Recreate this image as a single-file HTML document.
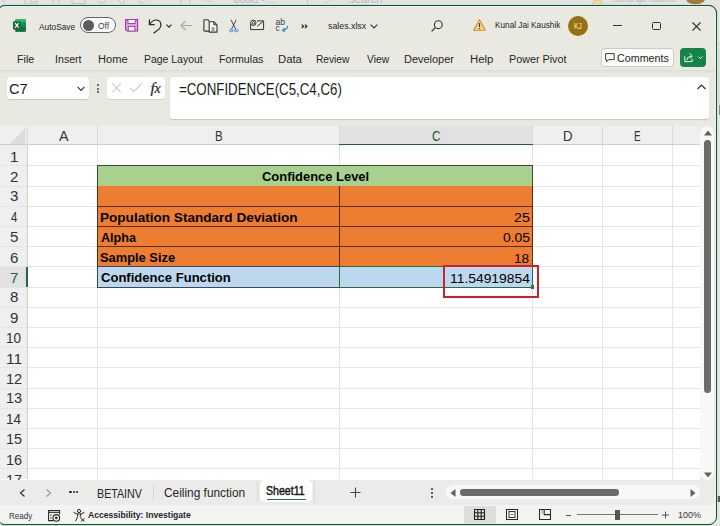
<!DOCTYPE html>
<html><head><meta charset="utf-8">
<style>
*{margin:0;padding:0;box-sizing:border-box}
html,body{width:720px;height:526px;overflow:hidden;background:#e4e4e4;position:relative;font-family:"Liberation Sans",sans-serif}
.a{position:absolute}
.tx{position:absolute;white-space:pre;line-height:1;transform-origin:0 0;font-family:"Liberation Sans",sans-serif}
.gv{position:absolute;width:1px;background:#e5e5e5}
.gh{position:absolute;height:1px;background:#e5e5e5}
svg{position:absolute;overflow:visible}
</style></head><body>
<!-- background window strip -->
<div class="a" style="left:0;top:0;width:720px;height:8px;background:#e3e3e4"></div>
<!-- faded background window features -->
<svg style="left:0;top:0" width="720" height="6" viewBox="0 0 720 6">
<g fill="none" stroke="#c4c4c4" stroke-width="1">
<path d="M2 0 L5 3"/>
<path d="M25 0 V4 H30 M31 0 V4 H37 V0 M32 2 H36"/>
<path d="M54 0 L52 4 M58 0 L60 4"/>
<path d="M72 0 V3.5 H85 V0"/>
<path d="M98 1 Q100 4 104 3 M106 0 L104 3"/>
<path d="M119 0 L121 4 M124 0 V4"/>
<path d="M138 0 L141 3 H145"/>
<path d="M181 0 V5 M190 0 V5"/>
<path d="M207 0 L209 2 L211 0"/>
<path d="M307.5 0 V5"/>
<path d="M325 4 L329 0"/>
<path d="M640 0 V5"/>
</g>
<path d="M592 5 L595 0 L600 0 L603 5 Z" fill="#efd9a8" stroke="#e9b774" stroke-width="0.8"/>
<ellipse cx="695.5" cy="-2.5" rx="10" ry="7" fill="#a07d35"/>
</svg>
<div class="tx" style="left:233.5px;top:-6px;font-size:11px;color:#b9b9b9;transform:scaleX(0.8)">Book1 - ...</div>
<div class="tx" style="left:347.5px;top:-6px;font-size:11px;color:#b9b9b9">Search</div>
<div class="tx" style="left:613px;top:-6px;font-size:10px;color:#bdbdbd;transform:scaleX(0.8)">Kunal Jai Kaushik</div>
<div class="a" style="left:717px;top:0;width:3px;height:526px;background:#e6e6e6"></div>
<div class="a" style="left:717px;top:44px;width:3px;height:1px;background:#cfcfcf"></div>
<div class="a" style="left:717px;top:49px;width:3px;height:56px;background:#dedede"></div>
<div class="a" style="left:718.5px;top:105px;width:1.5px;height:10px;background:#8a8a8a"></div>
<div class="a" style="left:717px;top:495.5px;width:3px;height:6px;background:#5a5a5a"></div>

<!-- window -->
<div class="a" id="win" style="left:-1.7px;top:5px;width:718.7px;height:520px;border:1.5px solid #245c3c;border-radius:6.5px 8px 8px 6.5px;background:#e9e9e2;overflow:hidden">
</div>

<!-- menu separator -->
<div class="a" style="left:0;top:70px;width:717px;height:1px;background:#dcdbd3"></div>
<div class="a" style="left:0;top:71px;width:717px;height:2px;background:#e4e3dc"></div>
<!-- name box -->
<div class="a" style="left:7px;top:77px;width:82px;height:22px;background:#fff;border-radius:3px;box-shadow:0 0.6px 1px rgba(0,0,0,0.14)"></div>
<svg style="left:77px;top:86px" width="8" height="6" viewBox="0 0 8 6"><path d="M0.6 0.8 L4 4.4 L7.4 0.8" fill="none" stroke="#333" stroke-width="1.1"/></svg>
<!-- vertical dots -->
<div class="a" style="left:96.8px;top:84px;width:2px;height:2px;background:#444;border-radius:1px"></div>
<div class="a" style="left:96.8px;top:87.5px;width:2px;height:2px;background:#444;border-radius:1px"></div>
<div class="a" style="left:96.8px;top:91px;width:2px;height:2px;background:#444;border-radius:1px"></div>
<!-- X check fx box -->
<div class="a" style="left:107px;top:77px;width:58px;height:22px;background:#fff;border-radius:3px;box-shadow:0 0.6px 1px rgba(0,0,0,0.1)"></div>
<svg style="left:111px;top:82px" width="11" height="11" viewBox="0 0 11 11"><path d="M1 1.3 L10 10.5 M10 1.3 L1 10.5" stroke="#a6a6a6" stroke-width="0.9"/></svg>
<svg style="left:129px;top:82px" width="14" height="11" viewBox="0 0 14 11"><path d="M1 5.8 L4.9 9.6 L13 1.2" fill="none" stroke="#a6a6a6" stroke-width="0.9"/></svg>
<div class="tx" style="left:150.5px;top:80.3px;font:italic 15.5px/1 'Liberation Serif',serif;color:#1e1e1e;-webkit-text-stroke:0.2px #1e1e1e;letter-spacing:-0.3px">f<span style="font-size:14px">x</span></div>
<!-- formula box -->
<div class="a" style="left:169.5px;top:77px;width:539px;height:42px;background:#fff;border-radius:3px;box-shadow:0 0.6px 1px rgba(0,0,0,0.14)"></div>
<svg style="left:697px;top:84px" width="9" height="6" viewBox="0 0 9 6"><path d="M0.5 5 L4.5 1 L8.5 5" fill="none" stroke="#333" stroke-width="1.2"/></svg>

<!-- grid area -->
<div class="a" style="left:0;top:125.5px;width:700px;height:354px;background:#fff"></div>
<!-- col headers -->
<div class="a" style="left:0;top:125.5px;width:700px;height:19.5px;background:#efefef"></div>
<div class="a" style="left:339px;top:125.5px;width:194px;height:19.5px;background:#e1e1e1"></div>
<div class="a" style="left:0;top:144.3px;width:700px;height:1.2px;background:#cdcdcd"></div>
<div class="a" style="left:339px;top:143.8px;width:194px;height:1.7px;background:#1f5f3c"></div>
<!-- corner triangle -->
<svg style="left:10px;top:127.8px" width="16" height="16" viewBox="0 0 16 16"><path d="M15.5 0 L15.5 16 L0 16 Z" fill="#dcdcdc"/></svg>
<div class="a" style="left:27px;top:127px;width:1px;height:18px;background:#dadada"></div>
<!-- row headers -->
<div class="a" style="left:0;top:145px;width:27px;height:334px;background:#efefef"></div>
<div class="a" style="left:0;top:266.5px;width:27px;height:20.5px;background:#e1e1e1"></div>
<div class="a" style="left:27px;top:145px;width:1px;height:334px;background:#d2d2d2"></div>
<div class="a" style="left:26.3px;top:266.5px;width:1.6px;height:20.5px;background:#2a6244"></div>
<div class="gv" style="left:97px;top:145px;height:334px"></div>
<div class="gv" style="left:97px;top:126px;height:18px;background:#d9d9d9"></div>
<div class="gv" style="left:339px;top:145px;height:334px"></div>
<div class="gv" style="left:339px;top:126px;height:18px;background:#d9d9d9"></div>
<div class="gv" style="left:532px;top:145px;height:334px"></div>
<div class="gv" style="left:532px;top:126px;height:18px;background:#d9d9d9"></div>
<div class="gv" style="left:602px;top:145px;height:334px"></div>
<div class="gv" style="left:602px;top:126px;height:18px;background:#d9d9d9"></div>
<div class="gv" style="left:672px;top:145px;height:334px"></div>
<div class="gv" style="left:672px;top:126px;height:18px;background:#d9d9d9"></div>
<div class="gh" style="left:28px;top:165px;width:672px"></div>
<div class="gh" style="left:0px;top:165px;width:27px;background:#e5e5e5"></div>
<div class="gh" style="left:28px;top:186px;width:672px"></div>
<div class="gh" style="left:0px;top:186px;width:27px;background:#e5e5e5"></div>
<div class="gh" style="left:28px;top:206px;width:672px"></div>
<div class="gh" style="left:0px;top:206px;width:27px;background:#e5e5e5"></div>
<div class="gh" style="left:28px;top:226px;width:672px"></div>
<div class="gh" style="left:0px;top:226px;width:27px;background:#e5e5e5"></div>
<div class="gh" style="left:28px;top:246px;width:672px"></div>
<div class="gh" style="left:0px;top:246px;width:27px;background:#e5e5e5"></div>
<div class="gh" style="left:28px;top:266px;width:672px"></div>
<div class="gh" style="left:0px;top:266px;width:27px;background:#e5e5e5"></div>
<div class="gh" style="left:28px;top:287px;width:672px"></div>
<div class="gh" style="left:0px;top:287px;width:27px;background:#e5e5e5"></div>
<div class="gh" style="left:28px;top:307px;width:672px"></div>
<div class="gh" style="left:0px;top:307px;width:27px;background:#e5e5e5"></div>
<div class="gh" style="left:28px;top:327px;width:672px"></div>
<div class="gh" style="left:0px;top:327px;width:27px;background:#e5e5e5"></div>
<div class="gh" style="left:28px;top:347px;width:672px"></div>
<div class="gh" style="left:0px;top:347px;width:27px;background:#e5e5e5"></div>
<div class="gh" style="left:28px;top:367px;width:672px"></div>
<div class="gh" style="left:0px;top:367px;width:27px;background:#e5e5e5"></div>
<div class="gh" style="left:28px;top:388px;width:672px"></div>
<div class="gh" style="left:0px;top:388px;width:27px;background:#e5e5e5"></div>
<div class="gh" style="left:28px;top:408px;width:672px"></div>
<div class="gh" style="left:0px;top:408px;width:27px;background:#e5e5e5"></div>
<div class="gh" style="left:28px;top:428px;width:672px"></div>
<div class="gh" style="left:0px;top:428px;width:27px;background:#e5e5e5"></div>
<div class="gh" style="left:28px;top:448px;width:672px"></div>
<div class="gh" style="left:0px;top:448px;width:27px;background:#e5e5e5"></div>
<div class="gh" style="left:28px;top:468px;width:672px"></div>
<div class="gh" style="left:0px;top:468px;width:27px;background:#e5e5e5"></div>

<!-- table -->
<div class="a" style="left:97px;top:165px;width:436px;height:22px;background:#a9d18e;border:1px solid #3f4a35"></div>
<div class="a" style="left:97px;top:186px;width:436px;height:81px;background:#ed7d31;border:1px solid #5a2a0a;border-top:none"></div>
<div class="a" style="left:98px;top:206px;width:434px;height:1px;background:#5a2a0a"></div>
<div class="a" style="left:98px;top:226px;width:434px;height:1px;background:#5a2a0a"></div>
<div class="a" style="left:98px;top:246px;width:434px;height:1px;background:#5a2a0a"></div>
<div class="a" style="left:339px;top:186px;width:1px;height:81px;background:#5a2a0a"></div>
<div class="a" style="left:97px;top:266px;width:436px;height:21.5px;background:#bdd7ee;border:1px solid #3a4a5a"></div>
<div class="a" style="left:339px;top:266px;width:1px;height:21px;background:#3a4a5a"></div>
<!-- active cell border -->
<div class="a" style="left:339px;top:266px;width:194px;height:21.5px;border:1px solid #2a6b45"></div>
<div class="a" style="left:530.5px;top:284.8px;width:3.8px;height:3.8px;background:#2a7a45"></div>
<!-- red annotation -->
<div class="a" style="left:442.5px;top:265.2px;width:96.5px;height:33.2px;border:2.6px solid #cc2229"></div>

<div class="tx" style="left:58.50px;top:128.80px;font-size:14.2px;font-weight:normal;color:#333;transform:scaleX(1.0111);">A</div>
<div class="tx" style="left:214.78px;top:129.84px;font-size:13.91px;font-weight:normal;color:#333;transform:scaleX(0.8250);">B</div>
<div class="tx" style="left:431.67px;top:128.80px;font-size:14.2px;font-weight:normal;color:#1e5a36;transform:scaleX(0.8333);">C</div>
<div class="tx" style="left:562.67px;top:128.80px;font-size:14.2px;font-weight:normal;color:#333;transform:scaleX(0.9333);">D</div>
<div class="tx" style="left:634.30px;top:128.80px;font-size:14.2px;font-weight:normal;color:#333;transform:scaleX(0.7000);">E</div>
<div class="tx" style="left:9.53px;top:149.70px;font-size:14.2px;font-weight:normal;color:#333;transform:scaleX(1.0667);">1</div>
<div class="tx" style="left:9.53px;top:169.50px;font-size:14.2px;font-weight:normal;color:#333;transform:scaleX(1.0667);">2</div>
<div class="tx" style="left:9.53px;top:189.30px;font-size:14.2px;font-weight:normal;color:#333;transform:scaleX(1.0667);">3</div>
<div class="tx" style="left:10.60px;top:210.10px;font-size:14.2px;font-weight:normal;color:#333;transform:scaleX(0.8000);">4</div>
<div class="tx" style="left:9.53px;top:229.90px;font-size:14.2px;font-weight:normal;color:#333;transform:scaleX(1.0667);">5</div>
<div class="tx" style="left:9.53px;top:250.70px;font-size:14.2px;font-weight:normal;color:#333;transform:scaleX(1.0667);">6</div>
<div class="tx" style="left:9.53px;top:270.50px;font-size:14.2px;font-weight:normal;color:#2a6244;transform:scaleX(1.0667);">7</div>
<div class="tx" style="left:9.53px;top:290.30px;font-size:14.2px;font-weight:normal;color:#333;transform:scaleX(1.0667);">8</div>
<div class="tx" style="left:9.53px;top:311.10px;font-size:14.2px;font-weight:normal;color:#333;transform:scaleX(1.0667);">9</div>
<div class="tx" style="left:5.85px;top:330.90px;font-size:14.2px;font-weight:normal;color:#333;transform:scaleX(0.9533);">10</div>
<div class="tx" style="left:5.70px;top:351.70px;font-size:14.2px;font-weight:normal;color:#333;transform:scaleX(1.1000);">11</div>
<div class="tx" style="left:5.78px;top:371.50px;font-size:14.2px;font-weight:normal;color:#333;transform:scaleX(1.0214);">12</div>
<div class="tx" style="left:5.78px;top:391.30px;font-size:14.2px;font-weight:normal;color:#333;transform:scaleX(1.0214);">13</div>
<div class="tx" style="left:5.85px;top:412.10px;font-size:14.2px;font-weight:normal;color:#333;transform:scaleX(0.9533);">14</div>
<div class="tx" style="left:5.78px;top:431.90px;font-size:14.2px;font-weight:normal;color:#333;transform:scaleX(1.0214);">15</div>
<div class="tx" style="left:5.78px;top:452.70px;font-size:14.2px;font-weight:normal;color:#333;transform:scaleX(1.0214);">16</div>
<div class="tx" style="left:5.78px;top:472.50px;font-size:14.2px;font-weight:normal;color:#333;transform:scaleX(1.0214);">17</div>
<div class="tx" style="left:261.70px;top:169.89px;font-size:13.62px;font-weight:bold;color:#000;transform:scaleX(0.9509);">Confidence Level</div>
<div class="tx" style="left:99.79px;top:210.76px;font-size:13.48px;font-weight:bold;color:#000;transform:scaleX(1.0072);">Population Standard Deviation</div>
<div class="tx" style="left:100.80px;top:230.71px;font-size:13.48px;font-weight:bold;color:#000;transform:scaleX(0.9368);">Alpha</div>
<div class="tx" style="left:99.85px;top:251.36px;font-size:13.48px;font-weight:bold;color:#000;transform:scaleX(0.9545);">Sample Size</div>
<div class="tx" style="left:100.80px;top:271.16px;font-size:13.48px;font-weight:bold;color:#000;transform:scaleX(0.9692);">Confidence Function</div>
<div class="tx" style="left:513.68px;top:212.12px;font-size:12.75px;font-weight:normal;color:#000;transform:scaleX(1.1154);">25</div>
<div class="tx" style="left:503.10px;top:231.92px;font-size:12.75px;font-weight:normal;color:#000;transform:scaleX(1.0917);">0.05</div>
<div class="tx" style="left:514.33px;top:252.72px;font-size:12.75px;font-weight:normal;color:#000;transform:scaleX(1.0692);">18</div>
<div class="tx" style="left:449.54px;top:271.98px;font-size:13.04px;font-weight:normal;color:#000;transform:scaleX(1.0635);">11.54919854</div>
<!-- vertical scrollbar -->
<div class="a" style="left:700px;top:125px;width:17px;height:355px;background:#e9e9e2"></div>
<div class="a" style="left:700.3px;top:126px;width:13.8px;height:354px;background:#f8f8f8;border-radius:6.9px"></div>
<svg style="left:703.5px;top:129.5px" width="8" height="6" viewBox="0 0 8 6"><path d="M0 5.5 L4 0.5 L8 5.5 Z" fill="#5f5f5f"/></svg>
<div class="a" style="left:703.8px;top:139.8px;width:7.6px;height:253.2px;background:#6b6b6b;border-radius:3.8px"></div>
<svg style="left:704px;top:471.5px" width="8" height="6" viewBox="0 0 8 6"><path d="M0 0.5 L4 5.5 L8 0.5 Z" fill="#5f5f5f"/></svg>

<!-- tab bar -->
<div class="a" style="left:0;top:479.5px;width:717px;height:25.5px;background:#ebebe9"></div>
<svg style="left:18.5px;top:488.5px" width="7" height="8" viewBox="0 0 7 8"><path d="M5.5 0.5 L1.5 4 L5.5 7.5" fill="none" stroke="#333" stroke-width="1.2"/></svg>
<svg style="left:45px;top:488.5px" width="7" height="8" viewBox="0 0 7 8"><path d="M1.5 0.5 L5.5 4 L1.5 7.5" fill="none" stroke="#9a9a9a" stroke-width="1.2"/></svg>
<div class="a" style="left:69.4px;top:491px;width:2.2px;height:2.2px;background:#222;border-radius:1.1px"></div>
<div class="a" style="left:72.6px;top:491px;width:2.2px;height:2.2px;background:#222;border-radius:1.1px"></div>
<div class="a" style="left:75.8px;top:491px;width:2.2px;height:2.2px;background:#222;border-radius:1.1px"></div>
<div class="a" style="left:153px;top:485px;width:1px;height:15px;background:#d2d2d2"></div>
<div class="a" style="left:256.5px;top:481px;width:1.2px;height:21px;background:#d9d9d9"></div>
<div class="a" style="left:259.5px;top:479.6px;width:52px;height:22.8px;background:#fff;border-radius:5px"></div>
<div class="a" style="left:266.5px;top:498.5px;width:39px;height:1.5px;background:#217346;border-radius:1px"></div>
<div class="a" style="left:314.3px;top:481px;width:1.2px;height:21px;background:#d9d9d9"></div>
<svg style="left:349.5px;top:487px" width="11" height="11" viewBox="0 0 11 11"><path d="M5.5 0.5 V10.5 M0.5 5.5 H10.5" stroke="#444" stroke-width="1.1"/></svg>
<div class="a" style="left:431.3px;top:488px;width:2px;height:2px;background:#333;border-radius:1px"></div>
<div class="a" style="left:431.3px;top:492px;width:2px;height:2px;background:#333;border-radius:1px"></div>
<div class="a" style="left:431.3px;top:496px;width:2px;height:2px;background:#333;border-radius:1px"></div>
<!-- h scrollbar -->
<div class="a" style="left:445.5px;top:485.2px;width:254px;height:13.6px;background:#f8f8f8;border-radius:6.8px"></div>
<svg style="left:450px;top:488.5px" width="6" height="8" viewBox="0 0 6 8"><path d="M5.5 0 L0.5 4 L5.5 8 Z" fill="#5f5f5f"/></svg>
<div class="a" style="left:459.5px;top:489px;width:159.5px;height:6.5px;background:#6a6a6a;border-radius:3.25px"></div>
<svg style="left:690px;top:488.5px" width="6" height="8" viewBox="0 0 6 8"><path d="M0.5 0 L5.5 4 L0.5 8 Z" fill="#5f5f5f"/></svg>

<!-- status bar -->
<div class="a" style="left:0;top:505px;width:717px;height:19px;background:#f3f3f3"></div>
<div class="a" style="left:463.5px;top:506px;width:32px;height:17.5px;background:#dedede"></div>
<!-- status icons -->
<svg style="left:47.5px;top:509.5px" width="13" height="12" viewBox="0 0 13 12"><path d="M5 10.6 H0.6 V0.6 H11.6 V4.5" fill="none" stroke="#2a2a2a" stroke-width="1.1"/><path d="M0.6 2.5 H11.6" stroke="#2a2a2a" stroke-width="0.9"/><rect x="2.3" y="4.6" width="1.2" height="1.2" fill="#2a2a2a"/><rect x="2.3" y="7.3" width="1.2" height="1.2" fill="#2a2a2a"/><circle cx="8.3" cy="7.9" r="3.3" fill="#f2f2f0" stroke="#2a2a2a" stroke-width="1.1"/><circle cx="8.3" cy="7.9" r="1.3" fill="#2a2a2a"/></svg>
<svg style="left:73px;top:508.5px" width="13" height="13" viewBox="0 0 13 13"><circle cx="6" cy="2" r="1.6" fill="none" stroke="#2a2a2a" stroke-width="1"/><path d="M0.8 3.5 Q3.3 5.2 6 5 Q8.7 5.2 11.2 3.5 M4.4 5.1 L4.7 7.6 L2.7 11.8 M7.6 5.1 L7.3 7.6 L8.1 9" fill="none" stroke="#2a2a2a" stroke-width="1" stroke-linejoin="round" stroke-linecap="round"/><path d="M7.9 9.3 L11.5 12.5 M11.5 9.3 L7.9 12.5" stroke="#2a2a2a" stroke-width="1"/></svg>
<svg style="left:474px;top:509.2px" width="11" height="11" viewBox="0 0 11 11"><path d="M0.5 0.5 H10.5 V10.5 H0.5 Z M0.5 3.8 H10.5 M0.5 7.2 H10.5 M3.8 0.5 V10.5 M7.2 0.5 V10.5" fill="none" stroke="#222" stroke-width="1.1"/></svg>
<svg style="left:506px;top:509.2px" width="12" height="11" viewBox="0 0 12 11"><rect x="0.5" y="0.5" width="11" height="10" fill="none" stroke="#2a2a2a" stroke-width="1.05"/><rect x="3" y="2.5" width="6" height="6" fill="none" stroke="#2a2a2a" stroke-width="0.9"/><path d="M4.5 5.5 H7.5" stroke="#555" stroke-width="0.7"/></svg>
<svg style="left:539px;top:509.2px" width="12" height="11" viewBox="0 0 12 11"><path d="M0.5 0.5 H11.5 V10.5 H0.5 Z M5.2 0.5 V5.6 H11.5" fill="none" stroke="#2a2a2a" stroke-width="1.05"/><path d="M3.2 1 V4.8" stroke="#777" stroke-width="0.8"/></svg>
<div class="a" style="left:565.5px;top:514.5px;width:5.5px;height:1px;background:#555"></div>
<div class="a" style="left:576.7px;top:514.2px;width:81px;height:1.2px;background:#777"></div>
<div class="a" style="left:615px;top:509.5px;width:4.5px;height:10px;background:#555"></div>
<svg style="left:662px;top:509.5px" width="7" height="10" viewBox="0 0 7 10"><path d="M3.5 1.5 V8.5 M0 5 H7" stroke="#555" stroke-width="1"/></svg>

<!-- ========== TITLE BAR ICONS ========== -->
<!-- excel icon -->
<svg style="left:13px;top:19px" width="13" height="13" viewBox="0 0 13 13">
<rect x="2.3" y="0" width="10.6" height="12.7" rx="1" fill="#1f9e5f"/>
<rect x="2.3" y="0" width="10.6" height="3.2" rx="1" fill="#2cb673"/>
<rect x="7.5" y="3.2" width="5.4" height="4.6" fill="#1c8c52"/>
<rect x="2.3" y="7.8" width="10.6" height="4.9" rx="1" fill="#12703d"/>
<rect x="0" y="2.3" width="7.8" height="8.3" rx="0.8" fill="#176a3c"/>
<path d="M2.1 4.2 L5.7 8.7 M5.7 4.2 L2.1 8.7" stroke="#fff" stroke-width="1.15"/>
</svg>
<!-- toggle -->
<div class="a" style="left:80px;top:17.2px;width:35.6px;height:16.1px;border:0.9px solid #666;border-radius:8px;background:#fbfbfa"></div>
<div class="a" style="left:82.8px;top:19.6px;width:11.2px;height:11.2px;border-radius:50%;background:#5c5c5c"></div>
<!-- save -->
<svg style="left:125px;top:19px" width="14" height="13" viewBox="0 0 14 13">
<path d="M0.6 0.6 H12.6 V12 H2.1 L0.6 10.5 Z" fill="#e7a0ea" stroke="#9c3aa0" stroke-width="1.1"/>
<rect x="3" y="0.6" width="7.2" height="3.9" fill="#fff" stroke="#9c3aa0" stroke-width="0.9"/>
<rect x="3.3" y="7.4" width="6.6" height="4.6" fill="#fff" stroke="#9c3aa0" stroke-width="0.9"/>
</svg>
<!-- undo -->
<svg style="left:148px;top:18px" width="15" height="16" viewBox="0 0 15 16">
<path d="M1.4 1.4 V6.6 H6.6" fill="none" stroke="#2a2a2a" stroke-width="1.2"/>
<path d="M1.7 6.3 Q4.5 1.8 8.6 2 Q12.9 2.6 12.9 6.9 Q12.9 9.1 11 11.1 L5.6 15.3" fill="none" stroke="#2a2a2a" stroke-width="1.2"/>
</svg>
<svg style="left:165.8px;top:23.6px" width="6" height="4" viewBox="0 0 6 4"><path d="M0.5 0.6 L3 3.2 L5.5 0.6" fill="none" stroke="#2a2a2a" stroke-width="1.1"/></svg>
<!-- back arrow -->
<svg style="left:180px;top:20px" width="13" height="11" viewBox="0 0 13 11"><path d="M12.5 5.5 H1 M5.5 1 L1 5.5 L5.5 10" fill="none" stroke="#a8a8a8" stroke-width="1.1"/></svg>
<!-- copy icon -->
<svg style="left:202.5px;top:18.5px" width="15" height="14" viewBox="0 0 15 14">
<path d="M6 12.1 H1.8 Q0.9 12.1 0.9 11.2 V1.6 Q0.9 0.8 1.8 0.8 H5 L6.5 2.5" fill="none" stroke="#333" stroke-width="1.1"/>
<path d="M6.2 2.7 H10.8 L14 5.8 V13.1 H6.2 Z" fill="#f7f7f5" stroke="#333" stroke-width="1.1" stroke-linejoin="round"/>
<path d="M10.8 2.7 V5.8 H14" fill="none" stroke="#333" stroke-width="1"/>
<path d="M8.6 9 H11.6 M8.6 11 H11.6" stroke="#333" stroke-width="0.9"/>
</svg>
<!-- scissors -->
<svg style="left:229px;top:19px" width="10" height="13" viewBox="0 0 10 13">
<path d="M2 0.8 L6.6 10 M7.2 0.8 L2.6 10" stroke="#333" stroke-width="0.9"/>
<ellipse cx="2.3" cy="11.6" rx="1.9" ry="1.2" fill="#b5d5ee" stroke="#4a90c8" stroke-width="0.9"/>
<ellipse cx="7.3" cy="11.6" rx="1.9" ry="1.2" fill="#b5d5ee" stroke="#4a90c8" stroke-width="0.9"/>
</svg>
<!-- email-ish icon -->
<svg style="left:250px;top:19px" width="15" height="12" viewBox="0 0 15 12">
<path d="M0.6 5 V10.6 H13.6 V1.9 H7" fill="none" stroke="#333" stroke-width="1"/>
<path d="M7.3 7.2 L13.3 2.2" stroke="#333" stroke-width="1"/>
<circle cx="3.3" cy="3.8" r="2.7" fill="#e9e9e2" stroke="#333" stroke-width="1"/>
<ellipse cx="3.5" cy="3.9" rx="0.9" ry="1.5" fill="none" stroke="#333" stroke-width="0.8"/>
</svg>
<!-- spelling -->
<div class="tx" style="left:275.6px;top:18px;font:8.6px/1 'Liberation Sans';color:#3a3a3a">ab</div>
<div class="tx" style="left:275.6px;top:24.4px;font:8.4px/1 'Liberation Sans';color:#3a3a3a">c</div>
<svg style="left:280px;top:25px" width="9" height="7" viewBox="0 0 9 7"><path d="M7.6 0.8 Q7.6 5 3.2 5.2 M5 3.3 L2.4 5.2 L5 7" fill="none" stroke="#2a8fbf" stroke-width="1.1"/></svg>
<!-- >> -->
<svg style="left:300.8px;top:24px" width="7" height="5" viewBox="0 0 7 5"><path d="M0.7 0.6 L2.6 2.3 L0.7 4 M4 0.6 L5.9 2.3 L4 4" fill="none" stroke="#222" stroke-width="1.2"/></svg>
<!-- filename chevron -->
<svg style="left:370px;top:23.5px" width="8" height="5" viewBox="0 0 8 5"><path d="M0.6 0.6 L4 4 L7.4 0.6" fill="none" stroke="#333" stroke-width="1.1"/></svg>
<!-- search -->
<svg style="left:431px;top:19.5px" width="12" height="12" viewBox="0 0 12 12"><circle cx="7.3" cy="4.7" r="3.9" fill="none" stroke="#333" stroke-width="1.1"/><path d="M4.5 7.5 L0.6 11.4" stroke="#333" stroke-width="1.2"/></svg>
<!-- warning -->
<svg style="left:473px;top:19px" width="13" height="12" viewBox="0 0 13 12"><path d="M6.5 0.8 L12.4 11.2 H0.6 Z" fill="#f7d08a" stroke="#e0852f" stroke-width="1.1" stroke-linejoin="round"/><path d="M6.5 4 V8" stroke="#333" stroke-width="1.1"/><circle cx="6.5" cy="9.6" r="0.6" fill="#333"/></svg>
<!-- avatar -->
<div class="a" style="left:568px;top:16px;width:20px;height:20px;border-radius:50%;background:#97700f"></div>
<!-- window controls -->
<div class="a" style="left:613px;top:25px;width:9px;height:1px;background:#333"></div>
<div class="a" style="left:652px;top:21.5px;width:9px;height:8.5px;border:1.1px solid #333;border-radius:1.5px"></div>
<svg style="left:691.5px;top:21.5px" width="9" height="9" viewBox="0 0 9 9"><path d="M0.5 0.5 L8.5 8.5 M8.5 0.5 L0.5 8.5" stroke="#333" stroke-width="1.1"/></svg>

<!-- comments button -->
<div class="a" style="left:600.5px;top:47.8px;width:73.5px;height:19.2px;border:1px solid #c9c9c6;border-radius:4px;background:#fbfbfa"></div>
<svg style="left:604.5px;top:52.5px" width="10" height="10" viewBox="0 0 10 10"><path d="M0.6 0.6 H9.2 V6.6 H3.6 L1.6 8.8 V6.6 H0.6 Z" fill="none" stroke="#333" stroke-width="0.95" stroke-linejoin="round"/></svg>
<!-- share button -->
<div class="a" style="left:680px;top:47.8px;width:26px;height:19.2px;border-radius:4px;background:#14844a"></div>
<svg style="left:683.5px;top:52px" width="11" height="11" viewBox="0 0 11 11"><path d="M0.8 4.3 V9.6 H8.2 V7" fill="none" stroke="#e8fbef" stroke-width="1"/><path d="M2.8 8 Q3 4.8 7 4.2" fill="none" stroke="#e8fbef" stroke-width="1"/><path d="M5.5 1.5 L8.4 4 L6 6.6" fill="none" stroke="#e8fbef" stroke-width="1" stroke-linejoin="round"/></svg>
<svg style="left:697.5px;top:56.2px" width="5" height="4" viewBox="0 0 5 4"><path d="M0.5 0.6 L2.5 2.6 L4.5 0.6" fill="none" stroke="#e8fbef" stroke-width="1"/></svg>

<div class="tx" style="left:38.80px;top:22.58px;font-size:8.84px;font-weight:normal;color:#262626;transform:scaleX(0.9447);">AutoSave</div>
<div class="tx" style="left:98.10px;top:21.61px;font-size:8.99px;font-weight:normal;color:#444;transform:scaleX(0.9417);">Off</div>
<div class="tx" style="left:328.00px;top:21.14px;font-size:9.71px;font-weight:normal;color:#262626;transform:scaleX(0.9071);">sales.xlsx</div>
<div class="tx" style="left:494.64px;top:20.42px;font-size:9.57px;font-weight:normal;color:#262626;transform:scaleX(0.8600);">Kunal Jai Kaushik</div>
<div class="tx" style="left:573.52px;top:22.12px;font-size:8.55px;font-weight:normal;color:#f8ecc8;transform:scaleX(0.7778);">KJ</div>
<div class="tx" style="left:16.58px;top:53.91px;font-size:10.58px;font-weight:normal;color:#262626;transform:scaleX(1.0187);">File</div>
<div class="tx" style="left:55.10px;top:53.91px;font-size:10.58px;font-weight:normal;color:#262626;transform:scaleX(1.0000);">Insert</div>
<div class="tx" style="left:98.25px;top:53.91px;font-size:10.58px;font-weight:normal;color:#262626;transform:scaleX(1.0519);">Home</div>
<div class="tx" style="left:144.01px;top:53.91px;font-size:10.58px;font-weight:normal;color:#262626;transform:scaleX(0.9879);">Page Layout</div>
<div class="tx" style="left:218.99px;top:53.91px;font-size:10.58px;font-weight:normal;color:#262626;transform:scaleX(1.0070);">Formulas</div>
<div class="tx" style="left:278.23px;top:53.91px;font-size:10.58px;font-weight:normal;color:#262626;transform:scaleX(1.0667);">Data</div>
<div class="tx" style="left:316.34px;top:53.91px;font-size:10.58px;font-weight:normal;color:#262626;transform:scaleX(0.9618);">Review</div>
<div class="tx" style="left:366.70px;top:53.91px;font-size:10.58px;font-weight:normal;color:#262626;transform:scaleX(0.9696);">View</div>
<div class="tx" style="left:404.46px;top:53.91px;font-size:10.58px;font-weight:normal;color:#262626;transform:scaleX(1.0362);">Developer</div>
<div class="tx" style="left:469.93px;top:53.91px;font-size:10.58px;font-weight:normal;color:#262626;transform:scaleX(1.0700);">Help</div>
<div class="tx" style="left:508.78px;top:53.91px;font-size:10.58px;font-weight:normal;color:#262626;transform:scaleX(1.0182);">Power Pivot</div>
<div class="tx" style="left:616.57px;top:53.20px;font-size:11.59px;font-weight:normal;color:#262626;transform:scaleX(0.9273);">Comments</div>
<div class="tx" style="left:9.34px;top:83.12px;font-size:13.77px;font-weight:normal;color:#1a1a1a;transform:scaleX(1.0562);">C7</div>
<div class="tx" style="left:179.15px;top:82.17px;font-size:15.65px;font-weight:normal;color:#1a1a1a;transform:scaleX(0.8500);">=CONFIDENCE(C5,C4,C6)</div>
<div class="tx" style="left:97.39px;top:487.67px;font-size:12.46px;font-weight:normal;color:#262626;transform:scaleX(0.8578);">BETAINV</div>
<div class="tx" style="left:164.09px;top:486.18px;font-size:13.04px;font-weight:normal;color:#262626;transform:scaleX(0.9115);">Ceiling function</div>
<div class="tx" style="left:266.31px;top:486.16px;font-size:11.88px;font-weight:normal;color:#1a1a1a;transform:scaleX(0.8905);-webkit-text-stroke:0.45px #1a1a1a;">Sheet11</div>
<div class="tx" style="left:9.06px;top:511.72px;font-size:8.55px;font-weight:normal;color:#333;transform:scaleX(0.9417);">Ready</div>
<div class="tx" style="left:88.00px;top:510.58px;font-size:9.13px;font-weight:bold;color:#262626;transform:scaleX(0.9422);">Accessibility: Investigate</div>
<div class="tx" style="left:677.92px;top:510.58px;font-size:9.13px;font-weight:normal;color:#333;transform:scaleX(0.9773);">100%</div>

<!-- window green border on top -->
<div class="a" style="left:-1.7px;top:4.8px;width:718.7px;height:520px;border:1.5px solid #1e5236;border-radius:6.5px 8px 8px 6.5px;box-shadow:0 0 0 0.8px #bfe6d0, inset 0 0 0 0.8px #e2f6e8"></div>
</body></html>
